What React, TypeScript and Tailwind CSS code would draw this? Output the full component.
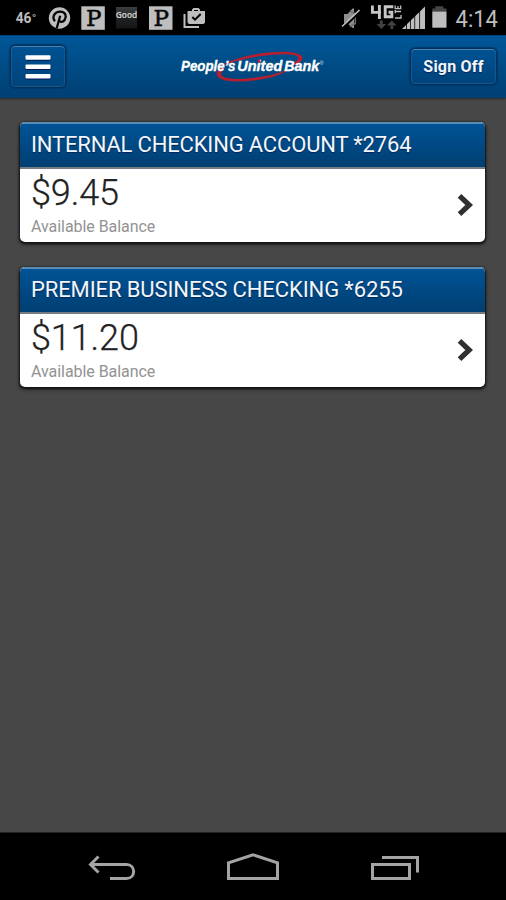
import React from "react";

function StatusBar() {
  return (
    <div className="flex h-[35px] shrink-0 items-center bg-black">
      <svg width="506" height="35" viewBox="0 0 506 35" fill="none">
        <text x="15.7" y="23.3" fill="#bebebe" fontFamily="Roboto" fontWeight="700" fontSize="14.5" textLength="15.7" lengthAdjust="spacingAndGlyphs">46</text>
        <text x="31.8" y="24.5" fill="#bebebe" fontFamily="Roboto" fontWeight="700" fontSize="14">˚</text>

        <circle cx="59.5" cy="18" r="10.7" fill="#bebebe" />
        <path d="M55 21.2C51.2 16.5 55.3 11.5 60.2 11.6C65.7 11.7 67 16.5 64.6 20C62.7 22.7 59.4 22.1 58.5 20M60.2 15.8L56.8 28" stroke="#050505" strokeWidth="2.3" />

        <rect x="81.3" y="6.3" width="23.5" height="23.5" fill="#bebebe" />
        <PLetter x={81.3} />
        <defs>
          <linearGradient id="good" x2="0" y2="1">
            <stop stopColor="#3c3f40" />
            <stop offset=".48" stopColor="#202324" />
            <stop offset="1" stopColor="#141617" />
          </linearGradient>
        </defs>
        <rect x="116" y="7" width="21" height="21.5" fill="url(#good)" />
        <text x="115.8" y="17.9" fill="#d0d0d0" stroke="#d0d0d0" strokeWidth=".2" fontFamily="Open Sans" fontWeight="600" fontSize="9.3" textLength="21.4" lengthAdjust="spacingAndGlyphs">Good</text>
        <rect x="149" y="6.3" width="23.5" height="23.5" fill="#bebebe" />
        <PLetter x={149} />

        <path d="M184.5 14V27H199" stroke="#bebebe" strokeWidth="2" />
        <path fillRule="evenodd" d="M188 11H192V9.5L193.5 8H198.5L200 9.5V11H205V22.5L203.5 24H189L187.5 22.5V11.5ZM194 10V11H198V10Z" fill="#bebebe" />
        <path d="M192.3 17L195 19.7L200.7 14" stroke="#050505" strokeWidth="2" />

        <path d="M344 14H347.5L352.5 8.5H354V28H352.5L347.5 23.5H344Z" fill="#8e8e8e" />
        <path d="M350 11L355.3 14V23.5L350 26.5" stroke="#707070" strokeWidth="1.5" />
        <path d="M342.8 28L360.3 11.5" stroke="black" strokeWidth="2.4" />
        <path d="M342 26.5L359.5 10" stroke="#bebebe" strokeWidth="1.7" />

        <path d="M372.4 5.5V12.4H381M379.4 5V19" stroke="#c6c6c6" strokeWidth="2.9" />
        <path d="M393.3 6.7H385.2V16.8H391.8V12.3H388.5" stroke="#c6c6c6" strokeWidth="2.9" />
        <g stroke="#bebebe" strokeWidth="1.3">
          <path d="M395.2 5.5V8.6H400.7V5.5M398 6V8.2M395.2 10V13.3M395.2 11.5H401M395 18H401V15" />
        </g>
        <path d="M379.8 20.5H382.8V24H386.2L381.3 29L376.5 24H379.8ZM390.5 29V25.5H387L391.8 20.5L396.6 25.5H393.3V29Z" fill="#424242" />
        <path d="M402 29L425 6.5V29Z" fill="#bebebe" />
        <path d="M406.5 23V30M410.5 19V30M414.7 15V30M419.6 10V30" stroke="black" strokeWidth=".8" />
        <path d="M432.3 8.5H435.3V6.3H443.3V8.5H446.5V11.5H432.3Z" fill="#464646" />
        <rect x="432.3" y="11.5" width="14.2" height="16.2" fill="#bebebe" />
        <text x="455.5" y="26.7" fill="#bebebe" fontFamily="Roboto" fontSize="23.5" fontWeight="400" textLength="42.5" lengthAdjust="spacingAndGlyphs">4:14</text>
      </svg>
    </div>
  );
}

function PLetter({ x }: { x: number }) {
  return (
    <text x={x + 4.6} y="26" fill="#080808" stroke="#080808" strokeWidth=".5" fontFamily="DejaVu Serif" fontWeight="400" fontSize="23" textLength="15.5" lengthAdjust="spacingAndGlyphs">P</text>
  );
}

function BankLogo() {
  return (
    <svg width="150" height="36" viewBox="0 0 150 36" fill="none" role="img" aria-label="People's United Bank">
      <path d="M44 16.5C67 1 124-2.5 126.5 7.5C126.5 10.8 123 13.5 119.5 15.5L117 13.5C121 11 123 9 122 7C117 .5 69 6 44 16.5Z" fill="#b51f30" />
      <path d="M44.5 17.5C36 25 42 31.5 61 31.5C82 31.5 102 27 113 19.5C93 27 68 30 55 28.5C44 27.5 43 24 48.5 18Z" fill="#b51f30" />
      <g fill="white" stroke="white" strokeWidth=".35" fontFamily="Liberation Sans" fontStyle="italic" fontWeight="700" fontSize="14.5">
        <text x="5" y="20.7" textLength="54.5" lengthAdjust="spacingAndGlyphs">People’s</text>
        <text x="61.3" y="20.7" textLength="45" lengthAdjust="spacingAndGlyphs">United</text>
        <text x="108.2" y="20.7" textLength="35" lengthAdjust="spacingAndGlyphs">Bank</text>
      </g>
      <text x="143.8" y="14.8" fill="#d6e2ed" fontFamily="Liberation Sans" fontSize="5">®</text>
      <circle cx="83" cy="11" r="1.5" fill="#cf1830" />
    </svg>
  );
}

const buttonStyle =
  "flex items-center justify-center rounded-[5px] border border-[#003260] bg-linear-to-b from-[#005293] to-[#00437a] shadow-[inset_0_1px_0_#4c82ad,inset_0_0_1px_1px_#16598c,0_0_1px_1px_#00396b]";

function Header() {
  return (
    <header className="flex h-[63px] shrink-0 items-start justify-between border-t border-[#00437a] bg-linear-to-b from-[#005798] to-[#004073] pr-[9px] pl-[10px] shadow-[0_1px_2px_#292929]">
      <button aria-label="Menu" className={`${buttonStyle} mt-[9px] h-[43px] w-[56px]`}>
        <svg width="26" height="26" viewBox="0 0 26 26">
          <g fill="#001958" transform="translate(0 1)">
            <rect x=".5" y="1.3" width="25" height="4.5" rx="1" />
            <rect x=".5" y="10.6" width="25" height="4.5" rx="1" />
            <rect x=".5" y="19.9" width="25" height="4.5" rx="1" />
          </g>
          <g fill="white">
            <rect x=".5" y="1.3" width="25" height="4.5" rx="1" />
            <rect x=".5" y="10.6" width="25" height="4.5" rx="1" />
            <rect x=".5" y="19.9" width="25" height="4.5" rx="1" />
          </g>
        </svg>
      </button>
      <div className="mt-[14px] ml-[25px]">
        <BankLogo />
      </div>
      <button className={`${buttonStyle} mt-[12px] h-[37px] w-[87px] pt-px text-[16px] font-bold tracking-[0.2px] whitespace-nowrap text-[#f2f5fa] [text-shadow:0_1px_1px_#002451]`}>
        Sign Off
      </button>
    </header>
  );
}

interface Account {
  name: string;
  balance: string;
  nameSpacing: string;
}

const accounts: Account[] = [
  { name: "INTERNAL CHECKING ACCOUNT *2764", balance: "$9.45", nameSpacing: "tracking-[-0.17px]" },
  { name: "PREMIER BUSINESS CHECKING *6255", balance: "$11.20", nameSpacing: "tracking-[-0.11px]" },
];

function AccountCard({ account }: { account: Account }) {
  return (
    <section className="h-[120px] overflow-hidden rounded-[5px] bg-white shadow-[0_1px_2px_1px_#151515,0_2px_4px_#202020]">
      <h2 className={`flex h-[47px] items-center border-t-2 border-b-2 border-t-[#578db5] border-b-[#777b82] bg-linear-to-b from-[#005396] to-[#003f72] pb-[2px] pl-[11px] text-[22px] font-normal whitespace-nowrap text-[#f3f6fa] [text-shadow:0_1px_1px_#002554] ${account.nameSpacing}`}>
        {account.name}
      </h2>
      <div className="flex h-[73px] items-center justify-between pr-[11px] pl-[11px]">
        <div className="h-full">
          <div className="mt-[3px] h-[43px] text-[36px] leading-[42px] font-light tracking-[-0.1px] text-[#222] [-webkit-text-stroke:0.25px_#222]">{account.balance}</div>
          <div className="text-[16px] leading-[24px] tracking-[-0.05px] text-[#929292]">Available Balance</div>
        </div>
        <svg className="mb-[2px]" width="17" height="24" viewBox="0 0 17 24" fill="none">
          <path d="M2.5 2.8L12.2 12L2.5 21.2" stroke="#303030" strokeWidth="5.2" />
        </svg>
      </div>
    </section>
  );
}

function NavigationBar() {
  return (
    <nav className="flex h-[68px] shrink-0 items-center justify-between border-t border-[#222] bg-black pt-[2px] pr-[87px] pl-[87px]">
      <svg width="49" height="30" viewBox="0 0 49 30" fill="none" stroke="#a4a4a4" strokeWidth="3">
        <path d="M11.5 3.5L3.5 11.5L11.5 19.5M4 11.5H39.5C49 11.5 49 25.5 39.5 25.5H23" />
      </svg>
      <svg width="54" height="30" viewBox="0 0 54 30" fill="none" stroke="#a4a4a4" strokeWidth="3">
        <path d="M2.5 25.5V9.8L27 1.8L51.5 9.8V25.5Z" />
      </svg>
      <svg width="50" height="30" viewBox="0 0 50 30" fill="none" stroke="#a4a4a4" strokeWidth="3">
        <path d="M3.5 11.5H40.5V25.5H3.5ZM13 4.5H48.5V19.5" />
      </svg>
    </nav>
  );
}

export default function App() {
  return (
    <div className="flex h-[900px] w-[506px] flex-col overflow-hidden bg-[#474747] font-['Roboto',sans-serif]">
      <StatusBar />
      <Header />
      <main className="flex grow flex-col gap-[25px] pt-[24px] pr-[21px] pl-[20px]">
        {accounts.map((account) => (
          <AccountCard key={account.name} account={account} />
        ))}
      </main>
      <NavigationBar />
    </div>
  );
}
